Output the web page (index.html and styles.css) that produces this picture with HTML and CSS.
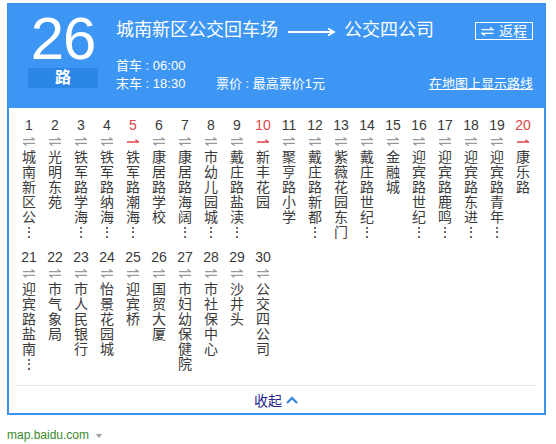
FILE: index.html
```html
<!DOCTYPE html>
<html lang="zh-CN">
<head>
<meta charset="utf-8">
<title>26路</title>
<link rel="stylesheet" href="styles.css">
</head>
<body>
<svg class="defs" width="0" height="0" aria-hidden="true">
  <symbol id="bi" viewBox="0 0 12 9">
    <path d="M0 2.6H11.6L8.4 0.4M12 6.4H0.4L3.6 8.6" fill="none" stroke="#9a9a9a" stroke-width="1.2"/>
  </symbol>
  <symbol id="one" viewBox="0 0 12 9">
    <path d="M0 5H11.6L8.4 2.8" fill="none" stroke="#e0474c" stroke-width="1.3"/>
  </symbol>
</svg>
<div class="panel">
  <div class="header">
    <div class="line">
      <div class="line-no">26</div>
      <div class="line-unit">路</div>
    </div>
    <div class="route">
      <div class="title-row">
        <span class="stop-name">城南新区公交回车场</span>
        <svg class="route-arrow" width="48" height="10" viewBox="0 0 48 10"><path d="M0 5H46M40 1.5L46 5L40 8.5" fill="none" stroke="#fff" stroke-width="1.8"/></svg>
        <span class="stop-name">公交四公司</span>
        <span class="return-btn"><svg width="13" height="9" viewBox="0 0 12 9"><path d="M0 2.6H11.6L8.4 0.4M12 6.4H0.4L3.6 8.6" fill="none" stroke="#fff" stroke-width="1.2"/></svg>返程</span>
      </div>
      <div class="info-row">首车 : 06:00</div>
      <div class="info-row">
        <span class="last">末车 : 18:30</span>
        <span>票价 : 最高票价1元</span>
        <a class="map-link" href="#">在地图上显示路线</a>
      </div>
    </div>
  </div>
  <div class="stops">
    <div class="stop"><span class="no">1</span><svg class="dir"><use href="#bi"/></svg><span class="name">城南新区公⋮</span></div>
    <div class="stop"><span class="no">2</span><svg class="dir"><use href="#bi"/></svg><span class="name">光明东苑</span></div>
    <div class="stop"><span class="no">3</span><svg class="dir"><use href="#bi"/></svg><span class="name">铁军路学海⋮</span></div>
    <div class="stop"><span class="no">4</span><svg class="dir"><use href="#bi"/></svg><span class="name">铁军路纳海⋮</span></div>
    <div class="stop"><span class="no red">5</span><svg class="dir"><use href="#one"/></svg><span class="name">铁军路潮海⋮</span></div>
    <div class="stop"><span class="no">6</span><svg class="dir"><use href="#bi"/></svg><span class="name">康居路学校</span></div>
    <div class="stop"><span class="no">7</span><svg class="dir"><use href="#bi"/></svg><span class="name">康居路海阔⋮</span></div>
    <div class="stop"><span class="no">8</span><svg class="dir"><use href="#bi"/></svg><span class="name">市幼儿园城⋮</span></div>
    <div class="stop"><span class="no">9</span><svg class="dir"><use href="#bi"/></svg><span class="name">戴庄路盐渎⋮</span></div>
    <div class="stop"><span class="no red">10</span><svg class="dir"><use href="#one"/></svg><span class="name">新丰花园</span></div>
    <div class="stop"><span class="no">11</span><svg class="dir"><use href="#bi"/></svg><span class="name">聚亨路小学</span></div>
    <div class="stop"><span class="no">12</span><svg class="dir"><use href="#bi"/></svg><span class="name">戴庄路新都⋮</span></div>
    <div class="stop"><span class="no">13</span><svg class="dir"><use href="#bi"/></svg><span class="name">紫薇花园东门</span></div>
    <div class="stop"><span class="no">14</span><svg class="dir"><use href="#bi"/></svg><span class="name">戴庄路世纪⋮</span></div>
    <div class="stop"><span class="no">15</span><svg class="dir"><use href="#bi"/></svg><span class="name">金融城</span></div>
    <div class="stop"><span class="no">16</span><svg class="dir"><use href="#bi"/></svg><span class="name">迎宾路世纪⋮</span></div>
    <div class="stop"><span class="no">17</span><svg class="dir"><use href="#bi"/></svg><span class="name">迎宾路鹿鸣⋮</span></div>
    <div class="stop"><span class="no">18</span><svg class="dir"><use href="#bi"/></svg><span class="name">迎宾路东进⋮</span></div>
    <div class="stop"><span class="no">19</span><svg class="dir"><use href="#bi"/></svg><span class="name">迎宾路青年⋮</span></div>
    <div class="stop"><span class="no red">20</span><svg class="dir"><use href="#one"/></svg><span class="name">康乐路</span></div>
    <div class="stop"><span class="no">21</span><svg class="dir"><use href="#bi"/></svg><span class="name">迎宾路盐南⋮</span></div>
    <div class="stop"><span class="no">22</span><svg class="dir"><use href="#bi"/></svg><span class="name">市气象局</span></div>
    <div class="stop"><span class="no">23</span><svg class="dir"><use href="#bi"/></svg><span class="name">市人民银行</span></div>
    <div class="stop"><span class="no">24</span><svg class="dir"><use href="#bi"/></svg><span class="name">怡景花园城</span></div>
    <div class="stop"><span class="no">25</span><svg class="dir"><use href="#bi"/></svg><span class="name">迎宾桥</span></div>
    <div class="stop"><span class="no">26</span><svg class="dir"><use href="#bi"/></svg><span class="name">国贸大厦</span></div>
    <div class="stop"><span class="no">27</span><svg class="dir"><use href="#bi"/></svg><span class="name">市妇幼保健院</span></div>
    <div class="stop"><span class="no">28</span><svg class="dir"><use href="#bi"/></svg><span class="name">市社保中心</span></div>
    <div class="stop"><span class="no">29</span><svg class="dir"><use href="#bi"/></svg><span class="name">沙井头</span></div>
    <div class="stop"><span class="no">30</span><svg class="dir"><use href="#bi"/></svg><span class="name">公交四公司</span></div>
  </div>
  <div class="collapse">
    <span>收起</span>
    <svg width="12" height="8" viewBox="0 0 12 8"><path d="M1 7L6 2L11 7" fill="none" stroke="#3b86e0" stroke-width="2.4"/></svg>
  </div>
</div>
<div class="source">map.baidu.com<span class="caret"></span></div>
</body>
</html>
```

FILE: styles.css
```css
html, body {
  margin: 0;
  padding: 0;
  background: #fff;
}
body {
  font-family: "Liberation Sans", "Noto Sans CJK SC", Arial, sans-serif;
  color: #333;
}
.defs {
  position: absolute;
  width: 0;
  height: 0;
  overflow: hidden;
}
.panel {
  margin: 3px 0 0 7px;
  width: 539px;
  box-sizing: border-box;
  border: 2px solid #3c93ee;
  background: #fff;
}
.header {
  display: flex;
  height: 103px;
  box-sizing: border-box;
  padding: 5px 11px 0 19px;
  background: #3d96f3;
  color: #fff;
}
.line {
  width: 70px;
  margin-right: 18px;
}
.line-no {
  font-family: "Liberation Sans", Arial, sans-serif;
  font-size: 60px;
  line-height: 58px;
  height: 58px;
  text-align: center;
  letter-spacing: -1px;
}
.line-unit {
  height: 20px;
  line-height: 20px;
  background: #2b86e6;
  text-align: center;
  font-size: 16px;
  font-weight: bold;
}
.route {
  flex: 1;
  padding-top: 8px;
}
.title-row {
  display: flex;
  align-items: center;
  height: 24px;
  font-size: 18px;
  line-height: 24px;
}
.route-arrow {
  margin: 3px 8px 0 10px;
}
.return-btn {
  margin-left: auto;
  display: flex;
  align-items: center;
  gap: 5px;
  height: 18px;
  box-sizing: border-box;
  padding: 0 5px;
  border: 1px solid #fff;
  font-size: 14px;
  line-height: 16px;
  margin-top: 2px;
}
.info-row {
  display: flex;
  font-size: 13px;
  line-height: 18px;
  white-space: pre;
}
.info-row:nth-child(2) {
  margin-top: 15px;
}
.last {
  width: 100px;
}
.map-link {
  margin-left: auto;
  color: #fff;
  text-decoration: underline;
}
.stops {
  display: grid;
  grid-template-columns: repeat(20, 26px);
  row-gap: 9px;
  padding: 9px 8px 13px 7px;
}
.stop {
  display: flex;
  flex-direction: column;
  align-items: center;
}
.no {
  font-size: 14px;
  line-height: 16px;
  color: #3a3a3a;
}
.no.red {
  color: #e0474c;
}
.dir {
  width: 12px;
  height: 9px;
  margin: 4px 0 4px;
}
.name {
  width: 14px;
  font-size: 14px;
  line-height: 15px;
  color: #3a3a3a;
  word-break: break-all;
  overflow-wrap: anywhere;
  text-align: center;
}
.collapse {
  margin: 0 8px 0 7px;
  border-top: 1px solid #e6e6e6;
  height: 27px;
  display: flex;
  justify-content: center;
  align-items: center;
  gap: 4px;
  font-size: 14px;
  color: #25258c;
}
.source {
  margin: 12px 0 0 7px;
  font-size: 12px;
  line-height: 16px;
  color: #3a8a2e;
  display: flex;
  align-items: center;
}
.caret {
  margin-left: 7px;
  width: 0;
  height: 0;
  border-left: 3px solid transparent;
  border-right: 3px solid transparent;
  border-top: 4px solid #a0a0a0;
  margin-top: 2px;
}
```
